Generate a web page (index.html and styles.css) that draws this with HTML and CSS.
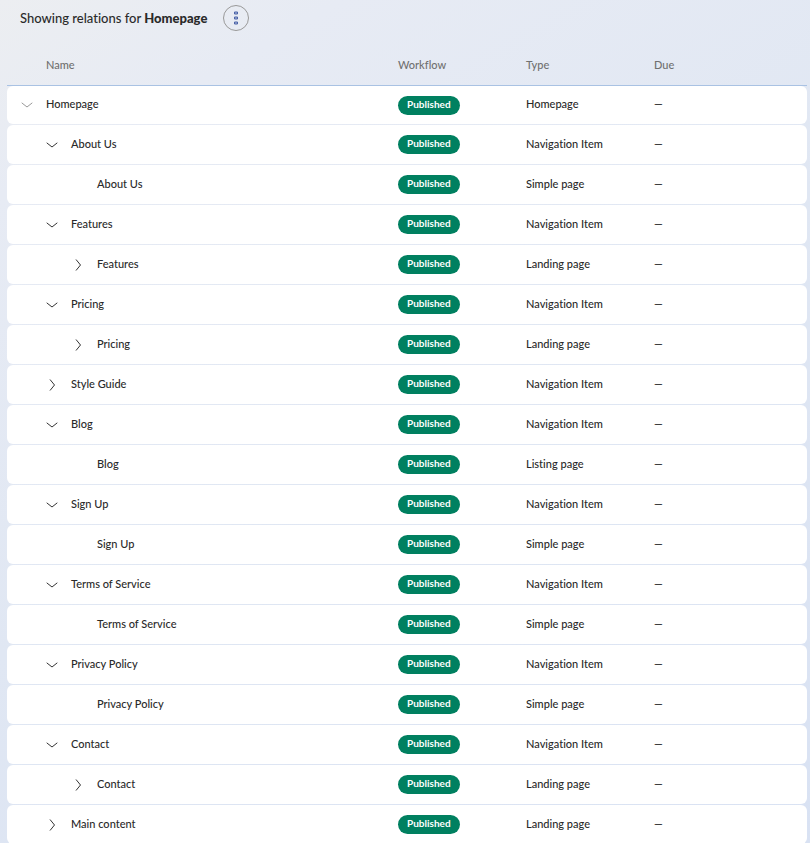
FILE: index.html
```html
<!DOCTYPE html>
<html lang="en">
<head>
<meta charset="utf-8">
<title>Relations</title>
<link rel="stylesheet" href="styles.css">
</head>
<body>
<svg class="sprite" aria-hidden="true">
  <symbol id="down" viewBox="0 0 12 12"><path d="M0.7 3.8 L6 8 L11.3 3.8"/></symbol>
  <symbol id="right" viewBox="0 0 12 12"><path d="M4 0.5 L8.5 6 L4 11.500"/></symbol>
</svg>
<header class="bar">
  <h1 class="title">Showing relations for <strong>Homepage</strong></h1>
  <button class="more" type="button" aria-label="More options">
    <svg viewBox="0 0 4 14" width="4" height="14" aria-hidden="true"><path d="M.5 1h3v2h-3zM.5 6h3v2h-3zM.5 11h3v2h-3z"/></svg>
  </button>
</header>
<main class="panel">
<table class="tree">
  <colgroup><col><col class="mid"><col class="mid"><col class="last"></colgroup>
  <thead>
    <tr><th class="name-head" scope="col">Name</th><th scope="col">Workflow</th><th scope="col">Type</th><th scope="col">Due</th></tr>
  </thead>
  <tbody>
    <tr class="root"><td><div class="name"><button class="toggle muted" type="button" aria-label="Collapse Homepage"><svg><use href="#down"/></svg></button><span>Homepage</span></div></td><td><span class="badge">Published</span></td><td>Homepage</td><td>—</td></tr>
    <tr><td><div class="name l1"><button class="toggle" type="button" aria-label="Collapse About Us"><svg><use href="#down"/></svg></button><span>About Us</span></div></td><td><span class="badge">Published</span></td><td>Navigation Item</td><td>—</td></tr>
    <tr><td><div class="name l2 leaf"><span>About Us</span></div></td><td><span class="badge">Published</span></td><td>Simple page</td><td>—</td></tr>
    <tr><td><div class="name l1"><button class="toggle" type="button" aria-label="Collapse Features"><svg><use href="#down"/></svg></button><span>Features</span></div></td><td><span class="badge">Published</span></td><td>Navigation Item</td><td>—</td></tr>
    <tr><td><div class="name l2"><button class="toggle" type="button" aria-label="Expand Features"><svg><use href="#right"/></svg></button><span>Features</span></div></td><td><span class="badge">Published</span></td><td>Landing page</td><td>—</td></tr>
    <tr><td><div class="name l1"><button class="toggle" type="button" aria-label="Collapse Pricing"><svg><use href="#down"/></svg></button><span>Pricing</span></div></td><td><span class="badge">Published</span></td><td>Navigation Item</td><td>—</td></tr>
    <tr><td><div class="name l2"><button class="toggle" type="button" aria-label="Expand Pricing"><svg><use href="#right"/></svg></button><span>Pricing</span></div></td><td><span class="badge">Published</span></td><td>Landing page</td><td>—</td></tr>
    <tr><td><div class="name l1"><button class="toggle" type="button" aria-label="Expand Style Guide"><svg><use href="#right"/></svg></button><span>Style Guide</span></div></td><td><span class="badge">Published</span></td><td>Navigation Item</td><td>—</td></tr>
    <tr><td><div class="name l1"><button class="toggle" type="button" aria-label="Collapse Blog"><svg><use href="#down"/></svg></button><span>Blog</span></div></td><td><span class="badge">Published</span></td><td>Navigation Item</td><td>—</td></tr>
    <tr><td><div class="name l2 leaf"><span>Blog</span></div></td><td><span class="badge">Published</span></td><td>Listing page</td><td>—</td></tr>
    <tr><td><div class="name l1"><button class="toggle" type="button" aria-label="Collapse Sign Up"><svg><use href="#down"/></svg></button><span>Sign Up</span></div></td><td><span class="badge">Published</span></td><td>Navigation Item</td><td>—</td></tr>
    <tr><td><div class="name l2 leaf"><span>Sign Up</span></div></td><td><span class="badge">Published</span></td><td>Simple page</td><td>—</td></tr>
    <tr><td><div class="name l1"><button class="toggle" type="button" aria-label="Collapse Terms of Service"><svg><use href="#down"/></svg></button><span>Terms of Service</span></div></td><td><span class="badge">Published</span></td><td>Navigation Item</td><td>—</td></tr>
    <tr><td><div class="name l2 leaf"><span>Terms of Service</span></div></td><td><span class="badge">Published</span></td><td>Simple page</td><td>—</td></tr>
    <tr><td><div class="name l1"><button class="toggle" type="button" aria-label="Collapse Privacy Policy"><svg><use href="#down"/></svg></button><span>Privacy Policy</span></div></td><td><span class="badge">Published</span></td><td>Navigation Item</td><td>—</td></tr>
    <tr><td><div class="name l2 leaf"><span>Privacy Policy</span></div></td><td><span class="badge">Published</span></td><td>Simple page</td><td>—</td></tr>
    <tr><td><div class="name l1"><button class="toggle" type="button" aria-label="Collapse Contact"><svg><use href="#down"/></svg></button><span>Contact</span></div></td><td><span class="badge">Published</span></td><td>Navigation Item</td><td>—</td></tr>
    <tr><td><div class="name l2"><button class="toggle" type="button" aria-label="Expand Contact"><svg><use href="#right"/></svg></button><span>Contact</span></div></td><td><span class="badge">Published</span></td><td>Landing page</td><td>—</td></tr>
    <tr><td><div class="name l1"><button class="toggle" type="button" aria-label="Expand Main content"><svg><use href="#right"/></svg></button><span>Main content</span></div></td><td><span class="badge">Published</span></td><td>Landing page</td><td>—</td></tr>
  </tbody>
</table>
</main>
</body>
</html>
```
FILE: styles.css
```css
* { box-sizing: border-box; }
body {
  margin: 0;
  font: 500 11px/16px Lato, "Liberation Sans", sans-serif;
  font-variant-ligatures: none;
  color: #2a2a2a;
  background: linear-gradient(150deg, #eceef1 0%, #e7ebf4 15%, #e0e7f3 50%, #d9e2f3 100%);
}
.sprite { display: none; }
.bar {
  display: flex;
  align-items: center;
  gap: 16px;
  height: 44px;
  padding: 0 20px 8px;
}
.title { margin: 0; font-size: 13px; font-weight: 500; line-height: 20px; }
.title strong { font-weight: 900; }
.more {
  display: flex;
  align-items: center;
  justify-content: center;
  width: 26px;
  height: 26px;
  padding: 0;
  border: 1px solid #999;
  border-radius: 50%;
  background: none;
}
.more path { fill: #a9b6d8; stroke: #4b63a8; stroke-width: 1; }
.panel { padding: 0 3px 0 7px; }
.tree {
  width: 100%;
  table-layout: fixed;
  border-collapse: separate;
  border-spacing: 0 1px;
}
.mid { width: 128px; }
.last { width: 153px; }
th, td { padding: 0; text-align: left; }
th {
  height: 40px;
  font-weight: 500;
  color: #707070;
  box-shadow: 0 1px 0 #a9c2e3;
}
.name-head { padding-left: 39px; }
td { height: 39px; padding-bottom: 2px; background: #fff; }
.root td { height: 38px; }
td:first-child { border-radius: 6px 0 0 6px; }
td:last-child { border-radius: 0 6px 6px 0; }
td:nth-child(2) { padding-bottom: 0; }
.name { display: flex; align-items: center; gap: 13px; padding-left: 14px; }
.l1 { padding-left: 39px; }
.l2 { padding-left: 65px; }
.leaf { padding-left: 90px; }
.toggle { width: 12px; height: 12px; margin-top: 2px; padding: 0; border: 0; background: none; color: #333; }
.toggle svg { display: block; width: 12px; height: 12px; fill: none; stroke: currentColor; }
.muted { color: #999; }
.badge {
  display: block;
  width: fit-content;
  padding: 0 9px 2px;
  border-radius: 10px;
  background: #008060;
  color: #fff;
  font-size: 10px;
  font-weight: 700;
  line-height: 17px;
}
```
